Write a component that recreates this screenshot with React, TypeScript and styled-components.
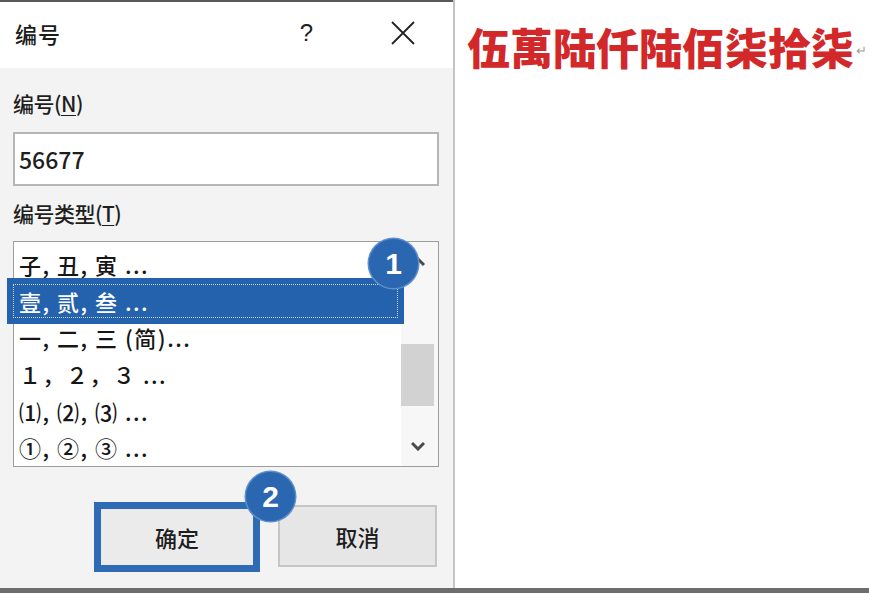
import React from 'react'
import styled, { createGlobalStyle } from 'styled-components'

const GlobalStyle = createGlobalStyle`
  html, body {
    margin: 0;
    padding: 0;
    background: #ffffff;
  }
  body {
    font-family: "Noto Sans CJK SC", "Noto Sans", sans-serif;
  }
`

const Page = styled.div`
  width: 869px;
  height: 593px;
  display: flex;
  flex-direction: column;
  overflow: hidden;
`

const Main = styled.div`
  flex: 1;
  display: flex;
  min-height: 0;
`

const BottomBar = styled.div`
  height: 5px;
  background: #6d6d6d;
`

const Dialog = styled.section`
  width: 455px;
  flex-shrink: 0;
  display: flex;
  flex-direction: column;
  border-right: 2px solid #c4c4c4;
  box-sizing: border-box;
`

const TopStrip = styled.div`
  height: 2px;
  background: #5a5a5a;
`

const TitleBar = styled.header`
  height: 66px;
  background: #ffffff;
  display: flex;
  align-items: center;
  justify-content: space-between;
  padding: 0 38px 4px 15px;
  box-sizing: border-box;
`

const Title = styled.h1`
  margin: 0;
  font-size: 22px;
  font-weight: 500;
  color: #1c1c1c;
  letter-spacing: 1px;
`

const TitleActions = styled.div`
  display: flex;
  align-items: center;
  gap: 78px;
`

const HelpGlyph = styled.span`
  font-family: "Liberation Sans", sans-serif;
  font-size: 24px;
  color: #222;
`

const Body = styled.div`
  flex: 1;
  background: #f3f3f3;
  padding: 20px 14px 0 13px;
  display: flex;
  flex-direction: column;
`

const FieldLabel = styled.label`
  display: block;
  font-size: 21px;
  font-weight: 500;
  line-height: 30px;
  color: #1e1e1e;
  letter-spacing: -0.5px;

  u {
    text-decoration-thickness: 1px;
    text-underline-offset: 3px;
  }
`

const TextInput = styled.div`
  margin: 14px 0 12px;
  height: 54px;
  box-sizing: border-box;
  border: 2px solid #b6b6b6;
  background: #ffffff;
  display: flex;
  align-items: center;
  padding-left: 4px;
  font-size: 23px;
  font-weight: 500;
  color: #1e1e1e;
`

const ListBox = styled.div`
  position: relative;
  margin-top: 13px;
  height: 226px;
  box-sizing: border-box;
  border: 1.5px solid #9c9c9c;
  background: #ffffff;
  display: flex;
`

const Items = styled.ul`
  flex: 1;
  margin: 0;
  padding: 4px 0 0;
  list-style: none;
`

const Item = styled.li<{ $selected?: boolean }>`
  height: ${({ $selected }) => ($selected ? '46.6px' : '36.6px')};
  margin: ${({ $selected }) => ($selected ? '-5px -3px -5px -7px' : '0')};
  padding-left: ${({ $selected }) => ($selected ? '12px' : '5px')};
  box-sizing: border-box;
  display: flex;
  align-items: center;
  font-size: 22px;
  font-weight: 500;
  letter-spacing: 1.5px;
  white-space: nowrap;
  color: ${({ $selected }) => ($selected ? '#ffffff' : '#161616')};
  background: ${({ $selected }) => ($selected ? '#2462ad' : 'transparent')};
  outline: ${({ $selected }) => ($selected ? '1px dotted #c9d6e8' : 'none')};
  outline-offset: -7px;
  position: relative;
  z-index: ${({ $selected }) => ($selected ? 1 : 0)};
`

const ScrollTrack = styled.div`
  width: 37px;
  display: flex;
  flex-direction: column;
  background: #f7f7f7;
`

const ArrowBox = styled.div`
  height: 40px;
  display: flex;
  align-items: center;
  justify-content: center;
  padding-right: 4px;
`

const Thumb = styled.div`
  margin: 62px 4px 0 0;
  height: 62px;
  background: #d2d2d2;
`

const Spacer = styled.div`
  flex: 1;
`

const Badge = styled.span<{ $top: number; $left: number }>`
  position: absolute;
  top: ${({ $top }) => $top}px;
  left: ${({ $left }) => $left}px;
  width: 49px;
  height: 49px;
  border-radius: 50%;
  background: #2b67b1;
  box-shadow: 0 0 0 1.5px #5d8fcc;
  color: #ffffff;
  font-family: "Liberation Sans", sans-serif;
  font-weight: 700;
  font-size: 30px;
  display: flex;
  align-items: center;
  justify-content: center;
  z-index: 3;
`

const ButtonRow = styled.div`
  margin-top: 33px;
  display: flex;
  justify-content: flex-end;
  align-items: center;
  gap: 18px;
  padding-right: 2px;
`

const Button = styled.button<{ $primary?: boolean }>`
  position: relative;
  font-family: inherit;
  font-size: 22px;
  font-weight: 500;
  color: #1e1e1e;
  width: ${({ $primary }) => ($primary ? '166px' : '159px')};
  height: ${({ $primary }) => ($primary ? '70px' : '62px')};
  box-sizing: border-box;
  border: ${({ $primary }) => ($primary ? '7px solid #2e6bb4' : '2px solid #c6c6c6')};
  background: ${({ $primary }) => ($primary ? '#ebebeb' : '#e6e6e6')};
  padding: 0;
  margin-top: ${({ $primary }) => ($primary ? '2px' : '0')};
`

const DocPane = styled.div`
  flex: 1;
  background: #ffffff;
  padding: 14px 0 0 12px;
`

const RedLine = styled.p`
  margin: 0;
  font-size: 43px;
  line-height: 56px;
  font-weight: 900;
  color: #d3282a;
  white-space: nowrap;
  display: flex;
  align-items: center;
`

const ReturnMark = styled.span`
  font-size: 13px;
  font-weight: 400;
  color: #a0a0a0;
  margin-left: 2px;
  margin-top: 8px;
`

const CloseIcon = () => (
  <svg width="24" height="24" viewBox="0 0 24 24">
    <path d="M1 1 L23 23 M23 1 L1 23" stroke="#222" strokeWidth="1.8" fill="none" />
  </svg>
)

const Chevron = ({ up }: { up?: boolean }) => (
  <svg width="14" height="10" viewBox="0 0 14 10">
    <path
      d={up ? 'M1 8 L7 2 L13 8' : 'M1 2 L7 8 L13 2'}
      stroke="#4a4a4a"
      strokeWidth="3"
      fill="none"
    />
  </svg>
)

const rows = [
  '子, 丑, 寅 ...',
  '壹, 贰, 叁 ...',
  '一, 二, 三 (简)...',
  '１，２，３ ...',
  '⑴, ⑵, ⑶ ...',
  '①, ②, ③ ...',
]

export default function App() {
  return (
    <>
      <GlobalStyle />
      <Page>
        <Main>
          <Dialog>
            <TopStrip />
            <TitleBar>
              <Title>编号</Title>
              <TitleActions>
                <HelpGlyph>?</HelpGlyph>
                <CloseIcon />
              </TitleActions>
            </TitleBar>
            <Body>
              <FieldLabel>
                编号(<u>N</u>)
              </FieldLabel>
              <TextInput>56677</TextInput>
              <FieldLabel>
                编号类型(<u>T</u>)
              </FieldLabel>
              <ListBox>
                <Items>
                  {rows.map((r, i) => (
                    <Item key={r} $selected={i === 1}>
                      {r}
                    </Item>
                  ))}
                </Items>
                <ScrollTrack>
                  <ArrowBox>
                    <Chevron up />
                  </ArrowBox>
                  <Thumb />
                  <Spacer />
                  <ArrowBox>
                    <Chevron />
                  </ArrowBox>
                </ScrollTrack>
                <Badge $top={-3} $left={355}>
                  1
                </Badge>
              </ListBox>
              <ButtonRow>
                <Button $primary>
                  确定
                  <Badge $top={-37} $left={145}>
                    2
                  </Badge>
                </Button>
                <Button>取消</Button>
              </ButtonRow>
            </Body>
          </Dialog>
          <DocPane>
            <RedLine>
              伍萬陆仟陆佰柒拾柒
              <ReturnMark>↵</ReturnMark>
            </RedLine>
          </DocPane>
        </Main>
        <BottomBar />
      </Page>
    </>
  )
}
